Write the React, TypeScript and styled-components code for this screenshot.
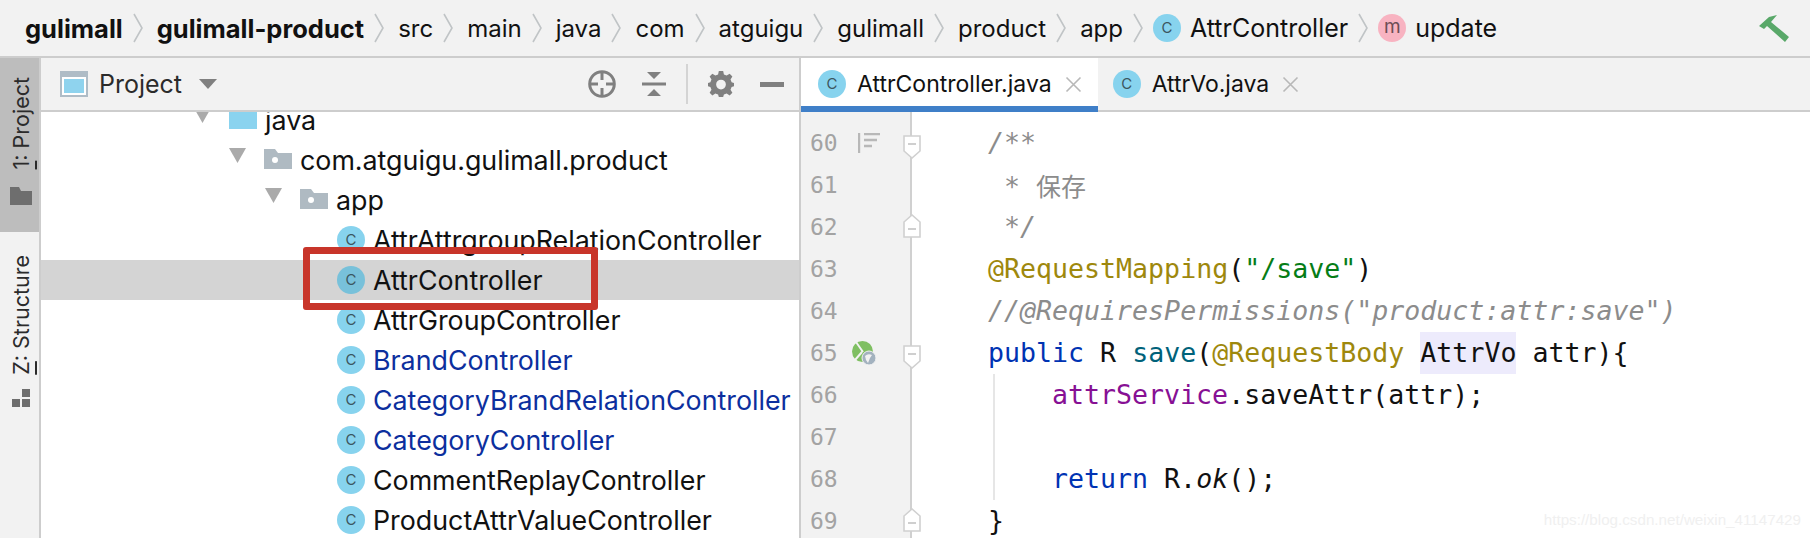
import React from "react";
import styled, { createGlobalStyle } from "styled-components";

const GlobalStyle = createGlobalStyle`
  html, body { margin: 0; padding: 0; background: #fff; overflow: hidden; }
  body { font-family: Inter, "Liberation Sans", sans-serif; }
`;

const Page = styled.div`
  width: 1810px;
  height: 538px;
  overflow: hidden;
  display: flex;
  flex-direction: column;
  position: relative;
`;

/* ---------- breadcrumb bar ---------- */
const TopBar = styled.div`
  height: 56px;
  flex: none;
  background: #f2f2f2;
  border-bottom: 2px solid #cdcdcd;
  display: flex;
  align-items: center;
  padding-left: 25px;
  padding-right: 21px;
`;
const Crumb = styled.span<{ $bold?: boolean; $symbol?: boolean }>`
  font-size: ${(p) => (p.$bold ? "25.5px" : p.$symbol ? "25px" : "24px")};
  font-weight: ${(p) => (p.$bold ? 700 : 400)};
  color: #111;
  white-space: nowrap;
`;
const ChevronBox = styled.svg`
  width: 10px;
  height: 30px;
  margin: 0 14px 0 10px;
  flex: none;
`;
const Hammer = styled.svg`
  width: 30px;
  height: 27px;
  margin-left: auto;
`;
const Badge = styled.span<{ $kind: "c" | "m" | "cDim" }>`
  width: 28px;
  height: 28px;
  border-radius: 50%;
  flex: none;
  display: inline-flex;
  align-items: center;
  justify-content: center;
  font-size: ${(p) => (p.$kind === "m" ? "19px" : "15px")};
  line-height: 1;
  padding-bottom: ${(p) => (p.$kind === "m" ? "3px" : "1px")};
  box-sizing: border-box;
  background: ${(p) => (p.$kind === "m" ? "#f8b3c1" : p.$kind === "cDim" ? "#78c1da" : "#87d3ee")};
  color: ${(p) => (p.$kind === "m" ? "#6d4d55" : "#3c5660")};
`;
const CrumbBadge = styled(Badge)`
  margin-left: -4px;
  margin-right: 9px;
`;

/* ---------- main ---------- */
const Main = styled.div`
  flex: 1;
  display: flex;
  min-height: 0;
`;
const Stripe = styled.div`
  width: 39px;
  flex: none;
  background: #f2f2f2;
  border-right: 2px solid #cdcdcd;
  display: flex;
  flex-direction: column;
`;
const StripeTab = styled.div<{ $active?: boolean }>`
  height: ${(p) => (p.$active ? "174px" : "auto")};
  background: ${(p) => (p.$active ? "#bdbdbd" : "transparent")};
  padding-top: ${(p) => (p.$active ? "19px" : "23px")};
  padding-left: 2px;
  box-sizing: border-box;
  display: flex;
  flex-direction: column;
  align-items: center;
  gap: ${(p) => (p.$active ? "18px" : "14px")};
`;
const StripeLabel = styled.span`
  writing-mode: vertical-rl;
  transform: rotate(180deg);
  font-size: 21.5px;
  color: #2b2b2b;
  white-space: nowrap;
  u { text-underline-offset: 3px; }
`;

const ProjectPanel = styled.div`
  width: 758px;
  flex: none;
  display: flex;
  flex-direction: column;
  border-right: 2px solid #cdcdcd;
`;
const PanelBar = styled.div`
  height: 52px;
  flex: none;
  background: #f2f2f2;
  border-bottom: 2px solid #cdcdcd;
  display: flex;
  align-items: center;
  padding-left: 19px;
  padding-right: 15px;
`;
const PanelTitle = styled.span`
  font-size: 25px;
  color: #2b2b2b;
  margin-left: 11px;
`;
const PanelTools = styled.div`
  margin-left: auto;
  display: flex;
  align-items: center;
`;
const ToolSvg = styled.svg<{ $gap?: number }>`
  margin-left: ${(p) => p.$gap ?? 0}px;
  display: block;
`;
const ToolDivider = styled.div`
  width: 2px;
  height: 40px;
  background: #d4d4d4;
  margin: 0 20px;
`;
const Tree = styled.div`
  flex: 1;
  overflow: hidden;
  min-height: 0;
`;
const TreeInner = styled.div`
  margin-top: -12px;
`;
const Row = styled.div<{ $indent: number; $selected?: boolean }>`
  height: 40px;
  display: flex;
  align-items: center;
  padding-left: ${(p) => p.$indent}px;
  background: ${(p) => (p.$selected ? "#d4d4d4" : "transparent")};
`;
const RowText = styled.span<{ $blue?: boolean }>`
  font-size: 26.8px;
  color: ${(p) => (p.$blue ? "#0c2f9e" : "#111")};
  margin-left: 8px;
  white-space: nowrap;
`;
const Twisty = styled.svg`
  width: 19px;
  height: 15px;
  flex: none;
  margin-right: 17px;
  margin-top: -10px;
`;
const FolderSvg = styled.svg`
  width: 28px;
  height: 20px;
  flex: none;
  margin-top: -2px;
`;
const Highlight = styled.div`
  position: absolute;
  left: 303px;
  top: 247px;
  width: 295px;
  height: 63px;
  box-sizing: border-box;
  border: 7px solid #c8352a;
  border-radius: 3px;
`;

/* ---------- editor ---------- */
const Editor = styled.div`
  flex: 1;
  min-width: 0;
  display: flex;
  flex-direction: column;
`;
const TabBar = styled.div`
  height: 52px;
  flex: none;
  background: #f2f2f2;
  border-bottom: 2px solid #cdcdcd;
  display: flex;
`;
const Tab = styled.div<{ $active?: boolean }>`
  height: 54px;
  box-sizing: border-box;
  display: flex;
  align-items: center;
  padding: 4px 16px 0 ${(p) => (p.$active ? "17px" : "15px")};
  background: ${(p) => (p.$active ? "#fff" : "transparent")};
  border-bottom: 6px solid ${(p) => (p.$active ? "#3f7fc8" : "transparent")};
`;
const TabText = styled.span`
  font-size: 23px;
  color: #111;
  margin-left: 11px;
  white-space: nowrap;
`;
const TabClose = styled.svg`
  width: 17px;
  height: 17px;
  margin-left: 13px;
  flex: none;
`;
const EditorBody = styled.div`
  flex: 1;
  min-height: 0;
  display: flex;
  overflow: hidden;
  position: relative;
`;
const Gutter = styled.div`
  width: 109px;
  flex: none;
  background: #f2f2f2;
  border-right: 2px solid #d0d0d0;
  padding-top: 10px;
`;
const GutterRow = styled.div`
  height: 42px;
  display: flex;
  align-items: center;
  padding-left: 9px;
  position: relative;
`;
const LineNo = styled.span`
  font-family: "DejaVu Sans Mono", monospace;
  font-size: 23px;
  color: #a3a3a3;
  width: 42px;
`;
const BookmarkSvg = styled.svg`
  margin-left: 6px;
`;
const Fold = styled.svg<{ $up?: boolean }>`
  position: absolute;
  left: 102px;
  top: ${(p) => (p.$up ? "8px" : "13px")};
  width: 18px;
  height: 24px;
`;
const Code = styled.div`
  flex: 1;
  padding: 10px 0 0 76px;
  font-family: "DejaVu Sans Mono", monospace;
  font-size: 26.6px;
  color: #111;
`;
const Line = styled.div`
  height: 42px;
  line-height: 42px;
  white-space: pre;
`;
const IndentBlock = styled.div`
  margin-left: 5px;
  border-left: 2px solid #e6e6e6;
  padding-left: 57px;
`;
const Tok = styled.span<{ $c: string; $i?: boolean }>`
  color: ${(p) => p.$c};
  font-style: ${(p) => (p.$i ? "italic" : "normal")};
`;
const Marked = styled.span`
  background: #edebfc;
  display: inline-block;
  height: 42px;
`;
const Cjk = styled.span`
  font-family: "Noto Sans CJK SC", sans-serif;
  font-size: 25px;
`;
const Watermark = styled.div`
  position: absolute;
  right: 9px;
  bottom: 9px;
  font-family: "Liberation Sans", sans-serif;
  font-size: 15.2px;
  line-height: 18px;
  color: #f0f0f0;
  white-space: nowrap;
`;

const Chevron = () => (
  <ChevronBox viewBox="0 0 10 30">
    <path d="M1 1 L9 15 L1 29" fill="none" stroke="#c0c4c6" strokeWidth="1.6" />
  </ChevronBox>
);

const TwistyIcon = () => (
  <Twisty viewBox="0 0 19 15">
    <path d="M1 0 H18 L9.5 15 Z" fill="#aaaaaa" />
  </Twisty>
);

const PackageFolder = () => (
  <FolderSvg viewBox="0 0 28 20">
    <path d="M0 0 H11 L14 4 H28 V20 H0 Z" fill="#afbac2" />
    <circle cx="11" cy="11" r="3" fill="#fff" />
  </FolderSvg>
);

const SourceFolder = () => (
  <FolderSvg viewBox="0 0 28 20">
    <rect width="28" height="20" fill="#8ad3ef" />
  </FolderSvg>
);

const CloseIcon = () => (
  <TabClose viewBox="0 0 17 17">
    <path d="M1.5 1.5 L15.5 15.5 M15.5 1.5 L1.5 15.5" stroke="#b8b8b8" strokeWidth="1.6" fill="none" />
  </TabClose>
);

const FoldEnd = ({ up }: { up?: boolean }) => (
  <Fold $up={up} viewBox="0 0 18 24">
    <path
      d={up ? "M1 23 V8 L9 1 L17 8 V23 Z" : "M1 1 H17 V16 L9 23 L1 16 Z"}
      fill="#fff"
      stroke="#d0d0d0"
      strokeWidth="1.6"
    />
    <path d={up ? "M5 15 H13" : "M5 9 H13"} stroke="#c4c4c4" strokeWidth="1.6" />
  </Fold>
);

const crumbs = ["src", "main", "java", "com", "atguigu", "gulimall", "product", "app"];

const C_ANN = "#9e880d";
const C_KW = "#0033b3";
const C_STR = "#067d17";
const C_CMT = "#8c8c8c";
const C_FN = "#00627a";
const C_FIELD = "#871094";

const treeRows = [
  { name: "AttrAttrgroupRelationController" },
  { name: "AttrController", selected: true },
  { name: "AttrGroupController" },
  { name: "BrandController", blue: true },
  { name: "CategoryBrandRelationController", blue: true },
  { name: "CategoryController", blue: true },
  { name: "CommentReplayController" },
  { name: "ProductAttrValueController" },
];

export default function App() {
  return (
    <Page>
      <GlobalStyle />
      <TopBar>
        <Crumb $bold>gulimall</Crumb>
        <Chevron />
        <Crumb $bold>gulimall-product</Crumb>
        <Chevron />
        {crumbs.map((c) => (
          <React.Fragment key={c}>
            <Crumb>{c}</Crumb>
            <Chevron />
          </React.Fragment>
        ))}
        <CrumbBadge $kind="c">C</CrumbBadge>
        <Crumb $symbol>AttrController</Crumb>
        <Chevron />
        <CrumbBadge $kind="m">m</CrumbBadge>
        <Crumb $symbol>update</Crumb>
        <Hammer viewBox="0 0 30 27">
          <path d="M0 11 L10 2 L18 0 L12 7 L30 22 L26 27 L8 11 L5 14 Z" fill="#59a869" />
        </Hammer>
      </TopBar>

      <Main>
        <Stripe>
          <StripeTab $active>
            <StripeLabel>
              <u>1</u>: Project
            </StripeLabel>
            <svg width="22" height="18" viewBox="0 0 22 18">
              <path d="M0 0 H9 L11 4 H22 V18 H0 Z" fill="#6e6e6e" />
            </svg>
          </StripeTab>
          <StripeTab>
            <StripeLabel>
              <u>Z</u>: Structure
            </StripeLabel>
            <svg width="18" height="18" viewBox="0 0 18 18">
              <path d="M10 0 H18 V8 H10 Z M0 10 H8 V18 H0 Z M10 10 H18 V18 H10 Z" fill="#6e6e6e" />
            </svg>
          </StripeTab>
        </Stripe>

        <ProjectPanel>
          <PanelBar>
            <svg width="28" height="26" viewBox="0 0 28 26">
              <rect width="28" height="26" fill="#afbcc6" />
              <rect x="2" y="6" width="24" height="18" fill="#fff" />
              <rect x="4" y="8" width="20" height="14" fill="#8fd3ee" />
            </svg>
            <PanelTitle>Project</PanelTitle>
            <ToolSvg $gap={17} width="18" height="10" viewBox="0 0 18 10">
              <path d="M0 0 H18 L9 10 Z" fill="#808080" />
            </ToolSvg>
            <PanelTools>
              <svg width="28" height="28" viewBox="0 0 28 28">
                <circle cx="14" cy="14" r="12.3" fill="none" stroke="#808080" strokeWidth="3" />
                <path d="M14 2 V10 M14 18 V26 M2 14 H10 M18 14 H26" stroke="#808080" strokeWidth="3" />
              </svg>
              <ToolSvg $gap={26} width="24" height="24" viewBox="0 0 24 24">
                <path d="M5 0 H19 L12 7 Z M0 10.5 H24 V13.5 H0 Z M12 17 L19 24 H5 Z" fill="#808080" />
              </ToolSvg>
              <ToolDivider />
              <svg width="26" height="26" viewBox="0 0 24 24">
                <path
                  fill="#808080"
                  fillRule="evenodd"
                  d="M10 0 H14 L14.7 3.2 L17.2 4.2 L20 2.5 L22.5 5 L20.8 7.8 L21.8 10.3 L24 11 V14 L21.8 14.7 L20.8 17.2 L22.5 20 L20 22.5 L17.2 20.8 L14.7 21.8 L14 24 H10 L9.3 21.8 L6.8 20.8 L4 22.5 L1.500 20 L3.200 17.200 L2.200 14.700 L0 14 V11 L2.200 10.300 L3.200 7.800 L1.500 5 L4 2.500 L6.800 4.200 L9.300 3.200 Z M12 8 A4.500 4.500 0 1 0 12 17 A4.500 4.500 0 1 0 12 8 Z"
                />
              </svg>
              <ToolSvg $gap={26} width="24" height="5" viewBox="0 0 24 5">
                <rect width="24" height="5" fill="#808080" />
              </ToolSvg>
            </PanelTools>
          </PanelBar>
          <Tree>
            <TreeInner>
              <Row $indent={152}>
                <TwistyIcon />
                <SourceFolder />
                <RowText>java</RowText>
              </Row>
              <Row $indent={187}>
                <TwistyIcon />
                <PackageFolder />
                <RowText>com.atguigu.gulimall.product</RowText>
              </Row>
              <Row $indent={223}>
                <TwistyIcon />
                <PackageFolder />
                <RowText>app</RowText>
              </Row>
              {treeRows.map((r) => (
                <Row key={r.name} $indent={296} $selected={r.selected}>
                  <Badge $kind={r.selected ? "cDim" : "c"}>C</Badge>
                  <RowText $blue={r.blue}>{r.name}</RowText>
                </Row>
              ))}
            </TreeInner>
          </Tree>
        </ProjectPanel>

        <Editor>
          <TabBar>
            <Tab $active>
              <Badge $kind="c">C</Badge>
              <TabText>AttrController.java</TabText>
              <CloseIcon />
            </Tab>
            <Tab>
              <Badge $kind="c">C</Badge>
              <TabText>AttrVo.java</TabText>
              <CloseIcon />
            </Tab>
          </TabBar>
          <EditorBody>
            <Gutter>
              <GutterRow>
                <LineNo>60</LineNo>
                <BookmarkSvg width="22" height="20" viewBox="0 0 22 20">
                  <path d="M1 0 V20 M6 1 H22 M6 7 H19 M6 13 H14" stroke="#b8b8b8" strokeWidth="2.4" fill="none" />
                </BookmarkSvg>
                <FoldEnd />
              </GutterRow>
              <GutterRow>
                <LineNo>61</LineNo>
              </GutterRow>
              <GutterRow>
                <LineNo>62</LineNo>
                <FoldEnd up />
              </GutterRow>
              <GutterRow>
                <LineNo>63</LineNo>
              </GutterRow>
              <GutterRow>
                <LineNo>64</LineNo>
              </GutterRow>
              <GutterRow>
                <LineNo>65</LineNo>
                <svg width="24" height="24" viewBox="0 0 24 24">
                  <circle cx="10.500" cy="10.500" r="10.500" fill="#7fbf62" />
                  <path d="M4 1 L11 11 M10 11 L3 19" stroke="#f2f2f2" strokeWidth="2" />
                  <circle cx="17" cy="17" r="7" fill="#a3b2bf" stroke="#f2f2f2" strokeWidth="1" />
                  <path d="M13 15 Q16 12 20 14 L18 17 L16 22 L14 19 Z" fill="#f2f2f2" />
                </svg>
                <FoldEnd />
              </GutterRow>
              <GutterRow>
                <LineNo>66</LineNo>
              </GutterRow>
              <GutterRow>
                <LineNo>67</LineNo>
              </GutterRow>
              <GutterRow>
                <LineNo>68</LineNo>
              </GutterRow>
              <GutterRow>
                <LineNo>69</LineNo>
                <FoldEnd up />
              </GutterRow>
            </Gutter>
            <Code>
              <Line>
                <Tok $c={C_CMT} $i>/**</Tok>
              </Line>
              <Line>
                <Tok $c={C_CMT} $i> * </Tok>
                <Tok $c={C_CMT}><Cjk>保存</Cjk></Tok>
              </Line>
              <Line>
                <Tok $c={C_CMT} $i> */</Tok>
              </Line>
              <Line>
                <Tok $c={C_ANN}>@RequestMapping</Tok>(<Tok $c={C_STR}>"/save"</Tok>)
              </Line>
              <Line>
                <Tok $c={C_CMT} $i>//@RequiresPermissions("product:attr:save")</Tok>
              </Line>
              <Line>
                <Tok $c={C_KW}>public</Tok> R <Tok $c={C_FN}>save</Tok>(<Tok $c={C_ANN}>@RequestBody</Tok>{" "}
                <Marked>AttrVo</Marked> attr){"{"}
              </Line>
              <IndentBlock>
                <Line>
                  <Tok $c={C_FIELD}>attrService</Tok>.saveAttr(attr);
                </Line>
                <Line> </Line>
                <Line>
                  <Tok $c={C_KW}>return</Tok> R.<Tok $c="#111" $i>ok</Tok>();
                </Line>
              </IndentBlock>
              <Line>{"}"}</Line>
            </Code>
            <Watermark>https://blog.csdn.net/weixin_41147429</Watermark>
          </EditorBody>
        </Editor>
      </Main>
      <Highlight />
    </Page>
  );
}
